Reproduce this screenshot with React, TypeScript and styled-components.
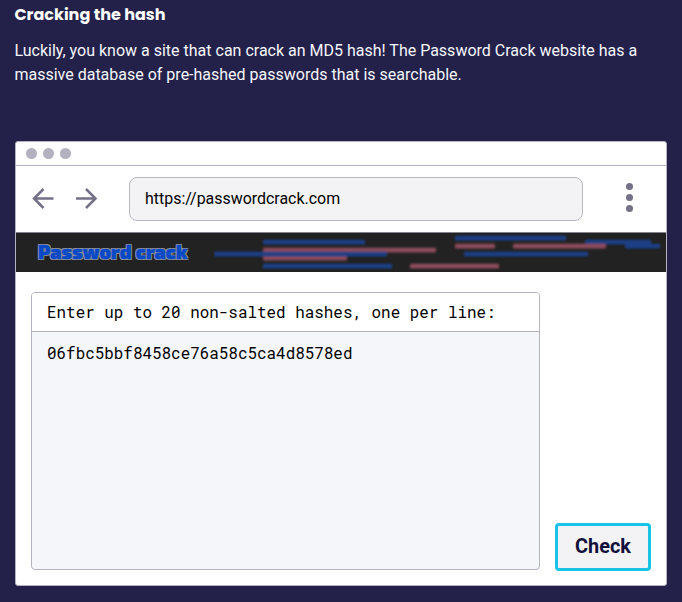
import React from "react";
import styled, { createGlobalStyle } from "styled-components";

const GlobalStyle = createGlobalStyle`
  * { box-sizing: border-box; }
  body { margin: 0; background: #23214a; font-family: Roboto, sans-serif; }
`;

const Page = styled.main`
  height: 602px;
  padding: 3px 15px 0;
  overflow: hidden;
`;

const Heading = styled.h1`
  margin: 0 0 0 -0.6px;
  height: 24px;
  font: 700 16px/24px Poppins, Inter, sans-serif;
  color: #fff;
`;

const Intro = styled.p`
  margin: 12px 0 0 -0.6px;
  height: 48px;
  font-size: 16px;
  line-height: 24px;
  color: #f6f6fa;
`;

const Browser = styled.section`
  display: flex;
  flex-direction: column;
  width: 652px;
  height: 445px;
  margin-top: 54px;
  border: 1px solid #b5b2c1;
  border-radius: 3px;
  background: #fff;
  overflow: hidden;
`;

const TitleBar = styled.div`
  display: flex;
  align-items: center;
  gap: 6px;
  height: 24px;
  flex: none;
  padding-left: 10px;
  border-bottom: 1px solid #b5b2c1;
`;

const WindowDot = styled.span`
  width: 11px;
  height: 11px;
  border-radius: 50%;
  background: #b3b0bf;
`;

const NavBar = styled.div`
  display: flex;
  align-items: center;
  height: 67px;
  flex: none;
  padding: 0 0 1px 15px;
  border-bottom: 1px solid #84828d;
`;

const Arrow = styled.svg`
  flex: none;
  width: 24px;
  height: 24px;
  margin: 0 19px 0 0;
  fill: none;
  stroke: #737088;
  stroke-width: 2.5;
`;

const Address = styled.div`
  flex: none;
  width: 454px;
  height: 44px;
  margin: 0 43px 0 12px;
  padding-left: 15px;
  border: 1px solid #b9b6c5;
  border-radius: 8px;
  background: #f3f3f6;
  font-size: 15.95px;
  line-height: 42px;
  color: #000;
`;

const Menu = styled.div`
  display: flex;
  flex-direction: column;
  gap: 4px;
  margin-bottom: 2px;
`;

const MenuDot = styled.i`
  width: 7px;
  height: 7px;
  border-radius: 50%;
  background: #737088;
`;

const Banner = styled.header`
  display: flex;
  align-items: center;
  height: 39px;
  flex: none;
  background: #222;
`;

const Wordmark = styled.div`
  flex: none;
  width: 198px;
  padding: 0 0 2px 22px;
  font: 900 19px/36px "Exo 2", "Open Sans", sans-serif;
  letter-spacing: 0.1px;
  white-space: nowrap;
  color: #0749c7;
  -webkit-text-stroke: 0.4px #0749c7;
  text-shadow: -1px -1px 0 #929397, 1px -1px 0 #929397,
    -1px 1px 0 #929397, 1px 1px 0 #929397;
`;

const Streaks = styled.svg`
  flex: none;
  width: 452px;
  height: 39px;
`;

const Content = styled.div`
  display: flex;
  flex: 1;
  align-items: flex-end;
  gap: 15px;
  padding: 0 15px 14px;
`;

const HashBox = styled.div`
  width: 509px;
  height: 278px;
  margin-bottom: 1px;
  border: 1px solid #b5b2c1;
  border-radius: 4px;
  background: #f5f6fa;
  overflow: hidden;
  font: 15.92px/24px "Roboto Mono", "Liberation Mono", monospace;
  color: #000;
`;

const HashLabel = styled.div`
  height: 39px;
  padding: 7px 15px;
  border-bottom: 1px solid #b5b2c1;
  background: #fff;
`;

const HashValue = styled.div`
  padding: 9px 15px;
`;

const CheckButton = styled.button`
  width: 96px;
  height: 48px;
  padding: 0 0 1px;
  border: 3px solid #19c3e8;
  border-radius: 4px;
  background: #f3f3f6;
  font: 700 19.9px/24px Roboto, sans-serif;
  color: #12103b;
`;

const BLUE = "#1c3f86";
const ROSE = "#8c4b5c";

// Left end, right end, vertical centre and colour of each streak in the banner.
const streaks: [number, number, number, string][] = [
  [49, 151, 9, BLUE],
  [49, 222, 17, ROSE],
  [49, 133, 25, ROSE],
  [0, 173, 21, BLUE],
  [49, 178, 33, BLUE],
  [196, 285, 33, ROSE],
  [241, 352, 5, BLUE],
  [241, 281, 13, ROSE],
  [250, 374, 21, BLUE],
  [371, 437, 9, BLUE],
  [299, 392, 13, ROSE],
  [411, 446, 13, BLUE],
];

export default function App() {
  return (
    <Page>
      <GlobalStyle />
      <Heading>Cracking the hash</Heading>
      <Intro>
        Luckily, you know a site that can crack an MD5 hash! The Password Crack website has a
        massive database of pre-hashed passwords that is searchable.
      </Intro>
      <Browser>
        <TitleBar>
          <WindowDot />
          <WindowDot />
          <WindowDot />
        </TitleBar>
        <NavBar>
          <Arrow viewBox="0 0 24 24"><path d="M22.5 11.5H3M12.5 2 3 11.5l9.5 9.5" /></Arrow>
          <Arrow viewBox="0 0 24 24"><path d="M2 11.5h19.5M12 2l9.5 9.5-9.5 9.5" /></Arrow>
          <Address>https://passwordcrack.com</Address>
          <Menu><MenuDot /><MenuDot /><MenuDot /></Menu>
        </NavBar>
        <Banner>
          <Wordmark>Password crack</Wordmark>
          <Streaks viewBox="0 0 452 39">
            <defs>
              <filter id="soft" x="-5%" y="-10%" width="110%" height="120%">
                <feGaussianBlur stdDeviation="1.3" />
              </filter>
            </defs>
            <g filter="url(#soft)">
              {streaks.map(([from, to, y, color]) => (
                <rect key={`${from}-${y}`} x={from} y={y - 2.2} width={to - from} height="4.8" rx="1" fill={color} />
              ))}
            </g>
          </Streaks>
        </Banner>
        <Content>
          <HashBox>
            <HashLabel>Enter up to 20 non-salted hashes, one per line:</HashLabel>
            <HashValue>06fbc5bbf8458ce76a58c5ca4d8578ed</HashValue>
          </HashBox>
          <CheckButton>Check</CheckButton>
        </Content>
      </Browser>
    </Page>
  );
}
